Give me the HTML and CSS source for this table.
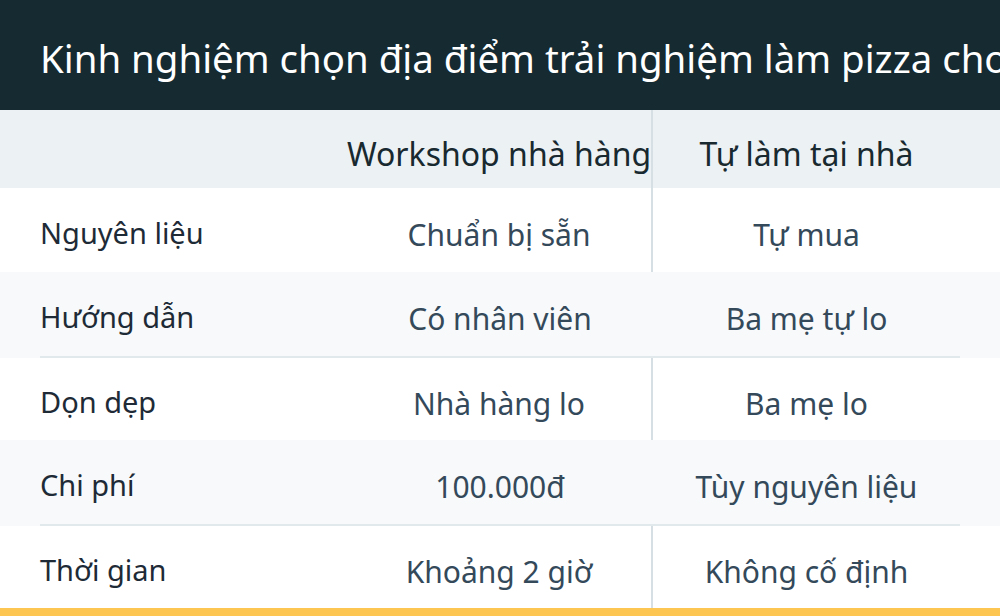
FILE: index.html
```html
<!DOCTYPE html>
<html lang="vi">
<head>
<meta charset="utf-8">
<title>Pizza</title>
<link rel="stylesheet" href="styles.css">
</head>
<body>
<div class="page">
  <header class="topbar">
    <h1 class="title">Kinh nghiệm chọn địa điểm trải nghiệm làm pizza cho bé</h1>
  </header>
  <div class="row head">
    <div class="grid">
      <div class="cell label"></div>
      <div class="cell val divider">Workshop nhà hàng</div>
      <div class="cell val">Tự làm tại nhà</div>
    </div>
  </div>
  <div class="row white first">
    <div class="grid">
      <div class="cell label">Nguyên liệu</div>
      <div class="cell val divider">Chuẩn bị sẵn</div>
      <div class="cell val">Tự mua</div>
    </div>
  </div>
  <div class="row gray">
    <div class="grid">
      <div class="cell label">Hướng dẫn</div>
      <div class="cell val">Có nhân viên</div>
      <div class="cell val">Ba mẹ tự lo</div>
    </div>
  </div>
  <div class="row white">
    <div class="grid">
      <div class="cell label">Dọn dẹp</div>
      <div class="cell val divider">Nhà hàng lo</div>
      <div class="cell val">Ba mẹ lo</div>
    </div>
  </div>
  <div class="row gray">
    <div class="grid">
      <div class="cell label">Chi phí</div>
      <div class="cell val">100.000đ</div>
      <div class="cell val">Tùy nguyên liệu</div>
    </div>
  </div>
  <div class="row white">
    <div class="grid">
      <div class="cell label">Thời gian</div>
      <div class="cell val divider">Khoảng 2 giờ</div>
      <div class="cell val">Không cố định</div>
    </div>
  </div>
  <div class="accent"></div>
</div>
</body>
</html>
```
FILE: styles.css
```css
* { box-sizing: border-box; }
html, body { margin: 0; padding: 0; }
body {
  width: 1000px;
  height: 616px;
  overflow: hidden;
  background: #ffffff;
  font-family: "Noto Sans", "Open Sans", sans-serif;
}
.page {
  display: flex;
  flex-direction: column;
  width: 1000px;
  height: 616px;
}
.topbar {
  height: 110px;
  background: #152a31;
  display: flex;
  align-items: center;
  padding-left: 40px;
  overflow: hidden;
}
.title {
  margin: 0;
  white-space: nowrap;
  color: #ffffff;
  font-weight: 400;
  font-size: 38.4px;
  line-height: 1;
  padding-top: 6px;
}
.row {
  padding: 0 40px;
}
.grid {
  display: grid;
  grid-template-columns: 307px 306px 307px;
  height: 100%;
}
.cell {
  display: flex;
  align-items: center;
  white-space: nowrap;
}
.label {
  color: #1e2b37;
  font-size: 29px;
  padding-top: 4px;
}
.val {
  justify-content: center;
  color: #34495a;
  font-size: 30px;
  padding-top: 8px;
}
.divider {
  border-right: 2px solid #d6e0e4;
}
.head {
  height: 78px;
  background: #ecf1f4;
}
.head .val {
  color: #18292f;
  font-size: 32px;
  padding-top: 8px;
}
.white { height: 82px; }
.white.first { height: 84px; }
.gray {
  height: 86px;
  background: #f7f9fa;
}
.gray .grid {
  height: 86px;
  border-bottom: 2px solid #e1e9ec;
}
.accent {
  height: 8px;
  background: #fdc653;
}
```
